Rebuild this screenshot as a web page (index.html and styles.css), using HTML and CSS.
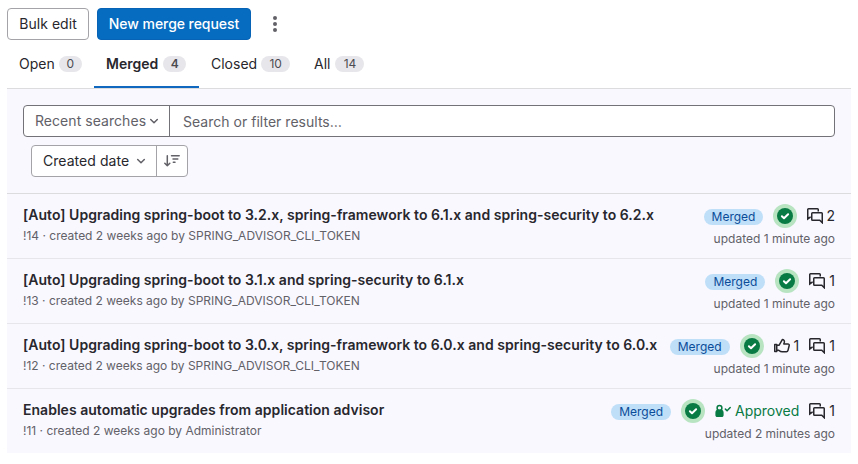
FILE: index.html
```html
<!DOCTYPE html>
<html lang="en">
<head>
<meta charset="utf-8">
<title>Merge requests</title>
<link rel="stylesheet" href="styles.css">
</head>
<body>
<svg class="defs" width="0" height="0">
  <symbol id="chevron" viewBox="0 0 16 16"><path d="M4.7 6.5 8 9.8l3.3-3.3" fill="none" stroke="currentColor" stroke-width="1.5" stroke-linecap="round" stroke-linejoin="round"/></symbol>
  <symbol id="comments" viewBox="0 0 16 16"><path d="M3.8 9.3H3L.75 11V1.5a.75.75 0 0 1 .75-.75h9a.75.75 0 0 1 .75.75v2M5.5 4.75h9a.75.75 0 0 1 .75.75v9.2l-2.5-2.45H5.5a.75.75 0 0 1-.75-.75v-6a.75.75 0 0 1 .75-.75z" fill="none" stroke="currentColor" stroke-width="1.5"/></symbol>
  <symbol id="thumb" viewBox="0 0 16 16"><path d="M.75 6.5h2v7h-2zM2.75 7.2h2.4L8.3 1.6c1.6 0 2.4 1.1 2 2.6l-.5 1.7h4.1c.9 0 1.5.8 1.3 1.6l-1.2 4.9c-.2.8-.8 1.3-1.6 1.3H8.2c-1.4 0-2.6-.8-3.4-1.4H2.75" fill="none" stroke="currentColor" stroke-width="1.5" stroke-linejoin="round"/></symbol>
  <symbol id="approval" viewBox="0 0 16 16"><circle cx="4.5" cy="5" r="2.4" fill="none" stroke="currentColor" stroke-width="1.5"/><path fill="currentColor" d="M2.6 6.6h3.8c1.3.4 2.2 1.5 2.2 2.9v2.7c0 1-.8 1.8-1.8 1.8H2.2c-1 0-1.8-.8-1.8-1.8V9.5c0-1.4.9-2.5 2.2-2.9z"/><path d="m10.4 6.1 1.7 1.7 3.1-3.2" fill="none" stroke="currentColor" stroke-width="1.5" stroke-linecap="round"/></symbol>
  <symbol id="check" viewBox="0 0 24 24"><circle cx="12" cy="12" r="12" fill="#b8e4c2"/><circle cx="12" cy="12" r="8" fill="#087a43"/><path d="m8.9 12.2 2.1 2.1 4.1-4.1" fill="none" stroke="#fff" stroke-width="2" stroke-linecap="round" stroke-linejoin="round"/></symbol>
</svg>
<main>
  <div class="actions">
    <button class="btn bulk">Bulk edit</button>
    <button class="btn primary">New merge request</button>
    <svg class="more" width="16" height="16" viewBox="0 0 16 16" fill="#626168"><circle cx="8" cy="2" r="2"/><circle cx="8" cy="8" r="2"/><circle cx="8" cy="14" r="2"/></svg>
  </div>
  <nav class="tabs">
    <a class="tab open">Open <span class="count">0</span></a>
    <a class="tab merged active">Merged <span class="count">4</span></a>
    <a class="tab closed">Closed <span class="count wide">10</span></a>
    <a class="tab all">All <span class="count wide">14</span></a>
  </nav>
  <section class="filters">
    <div class="search">
      <div class="recent">Recent searches<svg width="16" height="16"><use href="#chevron"/></svg></div>
      <div class="field">Search or filter results…</div>
    </div>
    <div class="sort">
      <div class="sort-by">Created date<svg width="16" height="16"><use href="#chevron"/></svg></div>
      <div class="direction"><svg width="16" height="16" viewBox="0 0 16 16" fill="none" stroke="currentColor" stroke-width="1.5" stroke-linecap="round" stroke-linejoin="round"><path d="M3.3 2.8v10M.8 10.3l2.5 2.5 2.5-2.5M7.5 2.8h7.7M9 6h4.8M9.3 9.2h1.7"/></svg></div>
    </div>
  </section>
  <ul class="list">
    <li class="row">
      <div class="info"><div class="title">[Auto] Upgrading spring-boot to 3.2.x, spring-framework to 6.1.x and spring-security to 6.2.x</div><div class="meta">!14 · created 2 weeks ago by <span>SPRING_ADVISOR_CLI_TOKEN</span></div></div>
      <div class="side"><div class="status"><span class="badge">Merged</span><svg class="ci" width="24" height="24"><use href="#check"/></svg><span class="stat tight"><svg width="16" height="16"><use href="#comments"/></svg>2</span></div><div class="updated">updated 1 minute ago</div></div>
    </li>
    <li class="row">
      <div class="info"><div class="title">[Auto] Upgrading spring-boot to 3.1.x and spring-security to 6.1.x</div><div class="meta">!13 · created 2 weeks ago by <span>SPRING_ADVISOR_CLI_TOKEN</span></div></div>
      <div class="side"><div class="status"><span class="badge">Merged</span><svg class="ci" width="24" height="24"><use href="#check"/></svg><span class="stat"><svg width="16" height="16"><use href="#comments"/></svg>1</span></div><div class="updated">updated 1 minute ago</div></div>
    </li>
    <li class="row">
      <div class="info"><div class="title">[Auto] Upgrading spring-boot to 3.0.x, spring-framework to 6.0.x and spring-security to 6.0.x</div><div class="meta">!12 · created 2 weeks ago by <span>SPRING_ADVISOR_CLI_TOKEN</span></div></div>
      <div class="side"><div class="status"><span class="badge">Merged</span><svg class="ci" width="24" height="24"><use href="#check"/></svg><span class="stat"><svg width="16" height="16"><use href="#thumb"/></svg>1</span><span class="stat"><svg width="16" height="16"><use href="#comments"/></svg>1</span></div><div class="updated">updated 1 minute ago</div></div>
    </li>
    <li class="row">
      <div class="info"><div class="title">Enables automatic upgrades from application advisor</div><div class="meta">!11 · created 2 weeks ago by <span>Administrator</span></div></div>
      <div class="side"><div class="status"><span class="badge">Merged</span><svg class="ci" width="24" height="24"><use href="#check"/></svg><span class="stat approved"><svg width="16" height="16"><use href="#approval"/></svg>Approved</span><span class="stat"><svg width="16" height="16"><use href="#comments"/></svg>1</span></div><div class="updated">updated 2 minutes ago</div></div>
    </li>
  </ul>
</main>
</body>
</html>
```
FILE: styles.css
```css
* { box-sizing: border-box; }
body { margin: 0; background: #fff; color: #28272d; font: 14px/20px Inter, sans-serif; }
svg { flex: none; }
.defs { position: absolute; }
main { margin: 0 7px; padding-top: 8px; }
.actions { display: flex; align-items: center; gap: 8px; height: 32px; }
.btn { height: 32px; padding: 0; border: 1px solid #a4a3a8; border-radius: 4px; background: #fff; color: #28272d; font: 14px/20px Inter, sans-serif; white-space: nowrap; }
.bulk { width: 82px; letter-spacing: .05px; }
.primary { width: 154px; border-color: #0763b5; background: #066cc0; color: #fff; font-weight: 500; letter-spacing: -.06px; }
.more { margin-left: 8px; }
.tabs { display: flex; height: 49px; border-bottom: 1px solid #dcdcde; }
.tab { display: flex; align-items: center; gap: 4px; height: 48px; padding: 0 12px; white-space: nowrap; }
.open { width: 87px; }
.merged { width: 105px; }
.closed { width: 103px; }
.active { gap: 5px; font-weight: 600; border-bottom: 2px solid #1068bf; padding-top: 2px; }
.all { gap: 5px; }
.count { min-width: 23px; height: 16px; padding: 0 7px; border-radius: 8px; background: #e7e7eb; color: #4c4b51; font-size: 12px; line-height: 16px; text-align: center; }
.wide { min-width: 29px; }
.filters { height: 105px; padding: 16px; background: #f9f8ff; border-bottom: 1px solid #dcdcde; }
.search { display: flex; height: 32px; border: 1px solid #737278; border-radius: 4px; background: #fff; color: #626168; overflow: hidden; }
.recent { display: flex; align-items: center; width: 146px; padding-left: 11px; border-right: 1px solid #737278; letter-spacing: .05px; white-space: nowrap; }
.field { padding: 6px 13px; letter-spacing: .02px; }
.sort { display: flex; width: 157px; height: 32px; margin: 8px 0 0 8px; border: 1px solid #a4a3a8; border-radius: 4px; background: #fff; }
.sort-by { display: flex; align-items: center; justify-content: space-between; width: 125px; padding: 0 7px 0 11px; border-right: 1px solid #a4a3a8; letter-spacing: .05px; white-space: nowrap; }
.sort svg { color: #626168; }
.direction { display: flex; flex: 1; align-items: center; justify-content: center; }
.list { margin: 0; padding: 0; list-style: none; background: #f9f8ff; }
.row { display: flex; justify-content: space-between; height: 65px; padding: 11px 16px 0; border-bottom: 1px solid #e7e6eb; }
.row:last-child { height: 64px; border-bottom: 0; }
.info, .side { white-space: nowrap; }
.title { font-weight: 600; letter-spacing: .026px; }
.meta, .updated { color: #626168; font-size: 12px; line-height: 16px; }
.meta { margin-top: 3px; }
.side { display: flex; flex-direction: column; align-items: flex-end; margin-top: -1px; }
.status { display: flex; align-items: center; height: 24px; }
.badge { height: 16px; margin-top: 2px; padding: 0 8px; border-radius: 8px; background: #bfdff8; color: #0b4c98; font-size: 12px; line-height: 16px; }
.ci { margin-left: 10px; }
.stat { display: flex; align-items: center; gap: 4px; margin-left: 10px; }
.tight { gap: 3px; }
.approved { color: #087a43; }
.updated { margin-top: 3px; }
```
